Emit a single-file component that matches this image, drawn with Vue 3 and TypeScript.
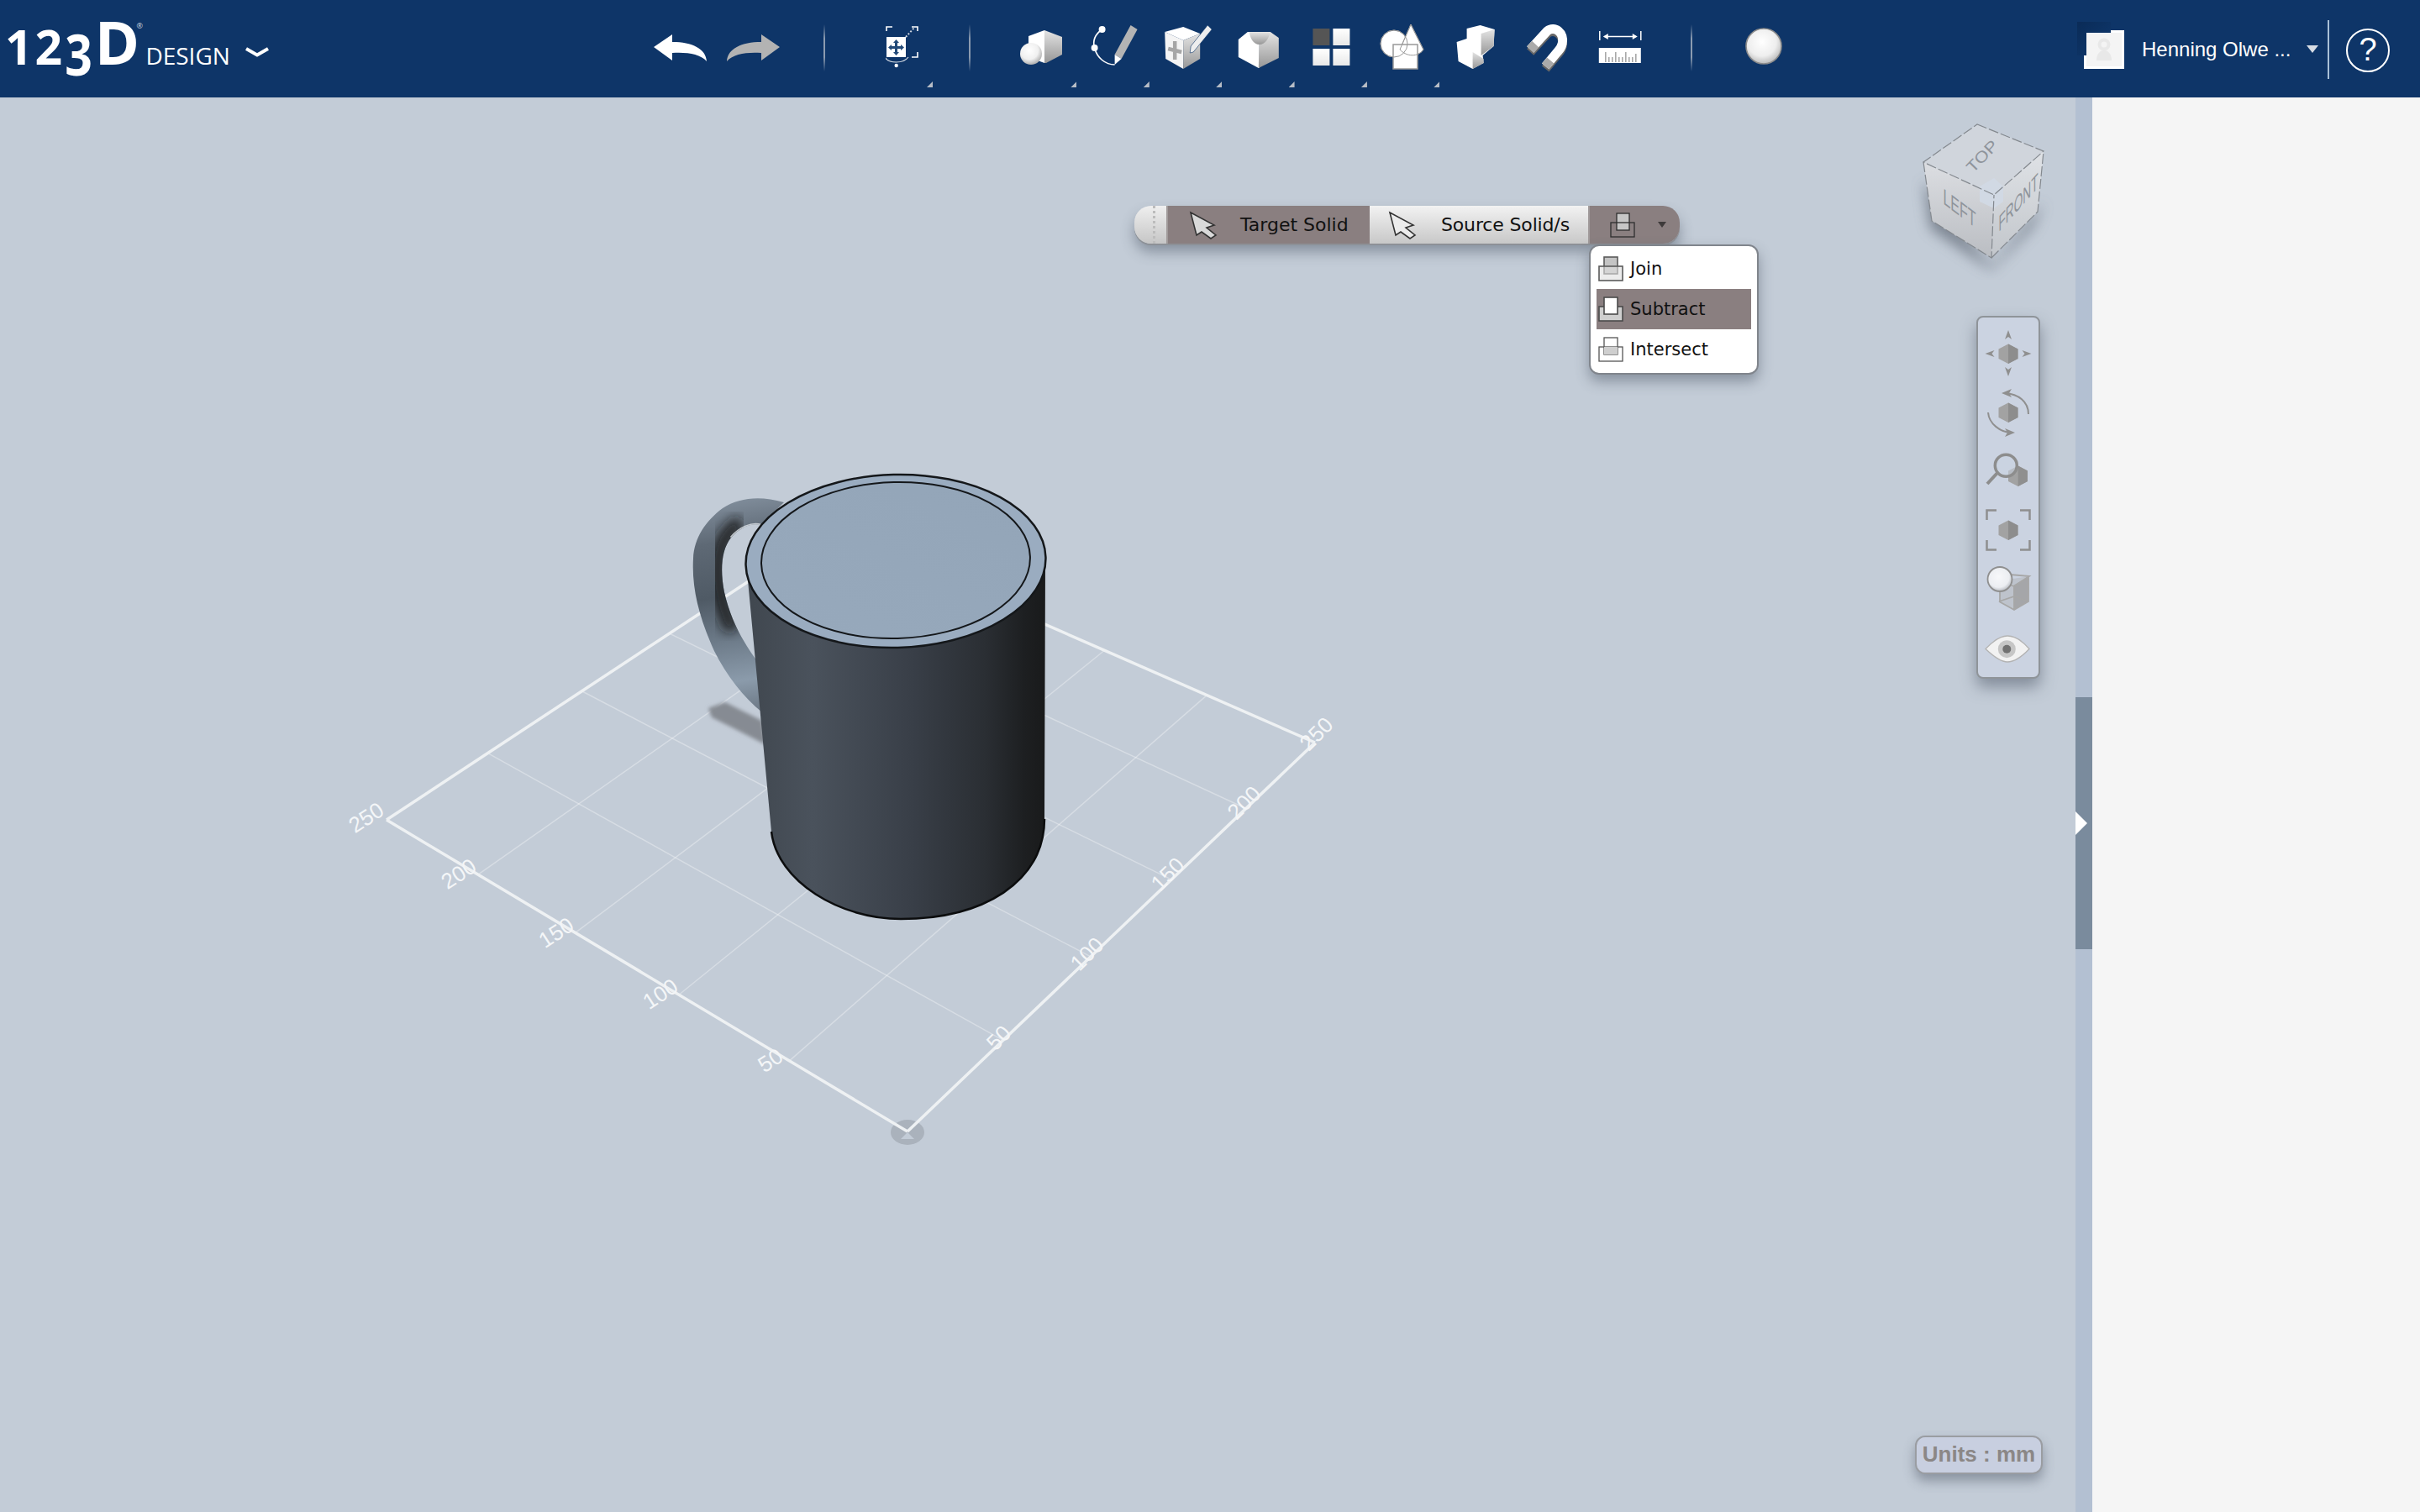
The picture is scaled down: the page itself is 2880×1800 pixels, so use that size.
<script setup lang="ts">
type Pt = [number, number];

const corners: Pt[] = [[1080, 1347], [1565, 884], [985, 630], [460, 976]];

// square -> quad projective map, the grid lines are not evenly spaced on screen
function project(u: number, v: number): Pt {
  const [[x0, y0], [x1, y1], [x2, y2], [x3, y3]] = corners;
  const sx = x0 - x1 + x2 - x3;
  const sy = y0 - y1 + y2 - y3;
  const dx1 = x1 - x2;
  const dx2 = x3 - x2;
  const dy1 = y1 - y2;
  const dy2 = y3 - y2;
  const d = dx1 * dy2 - dx2 * dy1;
  const g = (sx * dy2 - dx2 * sy) / d;
  const h = (dx1 * sy - sx * dy1) / d;
  const w = g * u + h * v + 1;
  return [
    ((x1 - x0 + g * x1) * u + (x3 - x0 + h * x3) * v + x0) / w,
    ((y1 - y0 + g * y1) * u + (y3 - y0 + h * y3) * v + y0) / w,
  ];
}

const steps = [0.2, 0.4, 0.6, 0.8];
const gridLines = steps.flatMap((t) => [
  [project(t, 0), project(t, 1)],
  [project(0, t), project(1, t)],
]);

const edges = [
  [corners[0], corners[1]],
  [corners[1], corners[2]],
  [corners[2], corners[3]],
  [corners[3], corners[0]],
];

const axisLabels = [
  { t: "250", x: 437, y: 975, r: -33 },
  { t: "200", x: 547, y: 1042, r: -33 },
  { t: "150", x: 663, y: 1112, r: -33 },
  { t: "100", x: 787, y: 1185, r: -33 },
  { t: "50", x: 918, y: 1264, r: -33 },
  { t: "50", x: 1190, y: 1237, r: -45 },
  { t: "100", x: 1295, y: 1137, r: -45 },
  { t: "150", x: 1391, y: 1042, r: -45 },
  { t: "200", x: 1482, y: 957, r: -45 },
  { t: "250", x: 1568, y: 875, r: -45 },
];

const toolBox = (i: number) => `${1196 + i * 86.4} 0 86.4 116`;
const hex = "38,23.5 49.5,29.5 49.5,41 38,47 26.5,41 26.5,29.5";
const handlePath =
  "M933 598 C905 590 880 592 860 605 C840 620 826 640 825 665 C823 700 832 735 850 775 C865 805 885 830 907 848 L903 790 C885 765 870 740 862 705 C857 680 858 655 870 640 C880 628 895 622 905 625 Z";
</script>

<template>
  <div class="app">
    <header class="topbar">
      <div class="logo">
        <span class="digits">12<span class="three">3</span></span><span class="big-d">D</span><span class="reg">®</span>
        <span class="design">DESIGN</span>
        <svg class="logo-chev" width="30" height="14" viewBox="0 0 30 14">
          <path d="M2 3 L15 10.5 L28 3" fill="none" stroke="#fff" stroke-width="4" />
        </svg>
      </div>

      <svg class="history" width="150" height="116" viewBox="778 0 150 116">
        <path d="M778 56 L800 41 L800 50 C824 50 840 58 841 73 C833 64 818 62 800 63 L800 72 Z" fill="#fff" />
        <path d="M928 56 L906 41 L906 50 C882 50 866 58 865 73 C873 64 888 62 906 63 L906 72 Z" fill="#b3b3b3" />
      </svg>
      <i class="sep sep-a"></i>

      <div class="tool has-menu fit">
        <svg width="60" height="116" viewBox="1054 0 60 116">
          <defs>
            <linearGradient id="faceR" x1="0" y1="0" x2="0" y2="1">
              <stop offset="0" stop-color="#e4e4e4" />
              <stop offset="1" stop-color="#979797" />
            </linearGradient>
            <linearGradient id="faceW" x1="0" y1="0" x2="0" y2="1">
              <stop offset="0" stop-color="#fff" />
              <stop offset="1" stop-color="#e8e8e8" />
            </linearGradient>
            <radialGradient id="ball" cx="0.42" cy="0.35" r="0.68">
              <stop offset="0" stop-color="#fff" />
              <stop offset="0.6" stop-color="#f0f0f0" />
              <stop offset="1" stop-color="#a9a9a9" />
            </radialGradient>
          </defs>
          <path d="M1055 37 V32 H1062 M1085 32 H1092 V37 M1092 62 V68 H1085" fill="none" stroke="#fff" stroke-width="1.6" />
          <path d="M1078 44 L1088 33" stroke="#cfd6e0" stroke-width="2" stroke-dasharray="2 2" />
          <rect x="1055" y="44" width="23" height="24" fill="#fff" />
          <path d="M1066.5 47 L1070 51 H1068 V55 H1072 V53 L1076 56.5 L1072 60 V58 H1068 V62 H1070 L1066.5 66 L1063 62 H1065 V58 H1061 V60 L1057 56.5 L1061 53 V55 H1065 V51 H1063 Z" fill="#234a78" />
          <path d="M1053 68 C1058 76 1075 76 1081 68" fill="none" stroke="#dfe4ea" stroke-width="1.2" />
          <circle cx="1066.7" cy="78" r="2.2" fill="#fff" />
        </svg>
      </div>
      <i class="sep sep-b"></i>

      <div class="tools">
        <div class="tool has-menu">
          <svg :viewBox="toolBox(0)" width="86.4" height="116">
            <path d="M1224 43 L1243 36 V75 L1224 68 Z" fill="#fff" />
            <path d="M1243 36 L1264 44 V65 L1245 75 L1243 75 Z" fill="url(#faceR)" />
            <circle cx="1227" cy="64" r="13" fill="url(#ball)" />
          </svg>
        </div>
        <div class="tool has-menu">
          <svg :viewBox="toolBox(1)" width="86.4" height="116">
            <path d="M1312 35 C1302 42 1301 50 1303 57 C1306 69 1316 77 1327 77" fill="none" stroke="#fff" stroke-width="1.6" />
            <circle cx="1312" cy="35" r="4" fill="#fff" />
            <circle cx="1303" cy="57" r="4" fill="#fff" />
            <path d="M1346 30 L1354 35 L1335 70 L1327 65 Z" fill="#b4b4b4" />
            <path d="M1327 65 L1335 70 L1327 77 Z" fill="#fff" />
          </svg>
        </div>
        <div class="tool has-menu">
          <svg :viewBox="toolBox(2)" width="86.4" height="116">
            <path d="M1386 38 L1408 32 L1428 40 L1408 48 Z" fill="#fff" />
            <path d="M1386 38 L1408 48 V82 L1387 70 Z" fill="#f4f4f4" />
            <path d="M1408 48 L1428 40 V70 L1408 82 Z" fill="url(#faceR)" />
            <path d="M1398 49 V71 M1390 58 L1406 62" stroke="#a6a6a6" stroke-width="4.5" fill="none" />
            <path d="M1437 30 L1442 35 L1420 62 L1416 63 L1417 55 Z" fill="#eee" stroke="#0e3568" stroke-width="0.6" />
          </svg>
        </div>
        <div class="tool has-menu">
          <svg :viewBox="toolBox(3)" width="86.4" height="116">
            <path d="M1474 47 L1485 38 H1499 V81 H1498 L1474 68 Z" fill="#fff" />
            <path d="M1499 38 H1512 L1522 45 V69 L1498 81 Z" fill="url(#faceR)" />
            <path d="M1487 38 C1488 46 1492 53 1499 53 C1506 53 1510 46 1512 38 Z" fill="url(#faceR)" />
          </svg>
        </div>
        <div class="tool has-menu">
          <svg :viewBox="toolBox(4)" width="86.4" height="116">
            <rect x="1562" y="34" width="20" height="20" fill="#555" />
            <rect x="1586" y="34" width="20" height="20" fill="url(#faceW)" />
            <rect x="1562" y="58" width="20" height="20" fill="url(#faceW)" />
            <rect x="1586" y="58" width="20" height="20" fill="url(#faceW)" />
          </svg>
        </div>
        <div class="tool has-menu">
          <svg :viewBox="toolBox(5)" width="86.4" height="116">
            <circle cx="1659" cy="52" r="16" fill="#fff" stroke="#999" />
            <path d="M1679 29 L1694 59 C1688 68 1674 68 1666 59 Z" fill="#fff" stroke="#999" />
            <rect x="1658" y="53" width="29" height="29" fill="#fff" stroke="#999" stroke-width="1.5" />
            <circle cx="1659" cy="52" r="16" fill="none" stroke="#999" />
            <path d="M1679 29 L1694 59 C1688 68 1674 68 1666 59 Z" fill="none" stroke="#999" />
          </svg>
        </div>
        <div class="tool">
          <svg :viewBox="toolBox(6)" width="86.4" height="116">
            <path d="M1746 34 L1762 30 L1779 35 L1778 55 L1765 66 L1766 75 L1753 82 L1736 73 L1734 50 L1746 46 Z" fill="#fff" />
            <path d="M1763 40 L1779 35 L1778 55 L1763 66 Z" fill="url(#faceR)" />
            <path d="M1753 62 L1766 70 V75 L1753 82 Z" fill="url(#faceR)" />
          </svg>
        </div>
        <div class="tool">
          <svg :viewBox="toolBox(7)" width="86.4" height="116">
            <path d="M1821 62 L1841 40 C1850 33 1862 42 1859 55 C1858 59 1856 62 1854 64 L1839 82" fill="none" stroke="#666" stroke-width="11" />
            <path d="M1821 59 L1841 37 C1850 30 1862 39 1859 52 C1858 56 1856 59 1854 61 L1839 79" fill="none" stroke="#fff" stroke-width="11" />
            <path d="M1821 59 L1827 52.5 M1845 72 L1839 79" fill="none" stroke="#aaa" stroke-width="11" />
          </svg>
        </div>
        <div class="tool">
          <svg :viewBox="toolBox(8)" width="86.4" height="116">
            <path d="M1904 37 V48 M1953 37 V48 M1910 43.5 H1947" stroke="#fff" stroke-width="1.5" />
            <path d="M1908 43.5 L1914 40 V47 Z M1949 43.5 L1943 40 V47 Z" fill="#fff" />
            <rect x="1903" y="57" width="50" height="18" fill="#fff" />
            <path d="M1911 62 V74 M1915 68 V74 M1919 68 V74 M1923 62 V74 M1927 68 V74 M1931 68 V74 M1935 62 V74 M1939 68 V74 M1943 68 V74 M1947 64 V74" stroke="#a8a8a8" stroke-width="1.6" />
          </svg>
        </div>
      </div>
      <i class="sep sep-c"></i>

      <svg class="material" width="46" height="46" viewBox="0 0 46 46">
        <defs>
          <radialGradient id="matBall" cx="0.45" cy="0.38" r="0.62">
            <stop offset="0" stop-color="#fff" />
            <stop offset="0.65" stop-color="#eee" />
            <stop offset="1" stop-color="#bdbdbd" />
          </radialGradient>
        </defs>
        <circle cx="23" cy="23" r="21" fill="url(#matBall)" stroke="#8b8b8b" stroke-width="1.6" />
      </svg>

      <div class="user">
        <div class="avatar">
          <svg width="48" height="46" viewBox="0 0 48 46">
            <rect x="3" y="3" width="42" height="40" fill="#f4f4f4" />
            <circle cx="24" cy="17" r="5.5" fill="none" stroke="#e8e8e8" stroke-width="4" />
            <path d="M15 36 C15 27 20 24 24 24 C28 24 33 27 33 36 Z" fill="#e8e8e8" />
          </svg>
        </div>
        <span class="user-name">Henning Olwe ...</span>
        <i class="user-caret"></i>
        <i class="user-sep"></i>
        <div class="help">?</div>
      </div>
    </header>

    <main class="workspace">
      <div class="viewport">
        <svg class="scene" width="2470" height="1684" viewBox="0 116 2470 1684">
          <defs>
            <linearGradient id="mugBody" x1="0" y1="0" x2="1" y2="0">
              <stop offset="0" stop-color="#40474f" />
              <stop offset="0.22" stop-color="#4a525c" />
              <stop offset="0.55" stop-color="#393f48" />
              <stop offset="0.8" stop-color="#2a2e33" />
              <stop offset="0.93" stop-color="#1d1f21" />
              <stop offset="1" stop-color="#191a1b" />
            </linearGradient>
            <linearGradient id="mugTop" x1="0" y1="1" x2="1" y2="0">
              <stop offset="0" stop-color="#97a9bc" />
              <stop offset="1" stop-color="#93a5b8" />
            </linearGradient>
            <linearGradient id="mugHandle" gradientUnits="userSpaceOnUse" x1="850" y1="595" x2="890" y2="848">
              <stop offset="0" stop-color="#828f9d" />
              <stop offset="0.2" stop-color="#5e6975" />
              <stop offset="0.45" stop-color="#4f5a65" />
              <stop offset="0.65" stop-color="#6c7a88" />
              <stop offset="0.85" stop-color="#8b9bab" />
              <stop offset="1" stop-color="#6c7885" />
            </linearGradient>
            <clipPath id="handleClip"><path :d="handlePath" /></clipPath>
            <linearGradient id="cubeL" x1="0" y1="0" x2="0" y2="1">
              <stop offset="0" stop-color="#dcdee2" />
              <stop offset="1" stop-color="#babdc2" />
            </linearGradient>
            <linearGradient id="cubeR" x1="0" y1="0" x2="0" y2="1">
              <stop offset="0" stop-color="#dfe2e6" />
              <stop offset="1" stop-color="#c2c6cb" />
            </linearGradient>
            <filter id="blur2"><feGaussianBlur stdDeviation="2" /></filter>
            <filter id="blur7"><feGaussianBlur stdDeviation="7" /></filter>
            <filter id="blur8"><feGaussianBlur stdDeviation="8" /></filter>
          </defs>

          <line
            v-for="(l, i) in gridLines"
            :key="i"
            :x1="l[0][0]"
            :y1="l[0][1]"
            :x2="l[1][0]"
            :y2="l[1][1]"
            stroke="#fff"
            stroke-opacity="0.33"
            stroke-width="1.5"
          />
          <ellipse cx="1080" cy="1348" rx="20" ry="15" fill="#aab2bc" />
          <path d="M1072 1356 L1080 1348 L1088 1356 Z" fill="#c3ccd7" />
          <line
            v-for="(l, i) in edges"
            :key="'e' + i"
            :x1="l[0][0]"
            :y1="l[0][1]"
            :x2="l[1][0]"
            :y2="l[1][1]"
            stroke="#eef1f3"
            stroke-width="3.5"
          />
          <text
            v-for="(a, i) in axisLabels"
            :key="'a' + i"
            class="axis-label"
            :transform="`translate(${a.x} ${a.y}) rotate(${a.r})`"
            text-anchor="middle"
            dominant-baseline="middle"
          >{{ a.t }}</text>

          <!-- mug -->
          <path d="M843 843 L863 836 L907 858 L912 887 L877 869 L847 854 Z" fill="#868b93" filter="url(#blur2)" />
          <path :d="handlePath" fill="url(#mugHandle)" />
          <g clip-path="url(#handleClip)">
            <path d="M882 622 C864 632 854 652 854 680 C855 705 862 730 872 750" fill="none" stroke="#14171a" stroke-opacity="0.85" stroke-width="18" filter="url(#blur7)" />
            <path d="M870 640 C880 628 895 622 905 625" fill="none" stroke="#dfe4e9" stroke-opacity="0.8" stroke-width="3" />
          </g>
          <path
            d="M889 680 L918 990 C925 1050 1000 1094 1072 1094 C1170 1094 1243 1050 1243 975 L1244 668 Z"
            fill="url(#mugBody)"
          />
          <path d="M918 990 C925 1050 1000 1094 1072 1094 C1170 1094 1243 1050 1243 975" fill="none" stroke="#0c0d0e" stroke-width="2.5" />
          <g transform="rotate(-1.5 1066 668)">
            <ellipse cx="1066" cy="668" rx="178.5" ry="103" fill="#9aacc0" stroke="#14171a" stroke-width="2.5" />
            <ellipse cx="1066" cy="667" rx="160" ry="93" fill="url(#mugTop)" stroke="#14171a" stroke-width="2" />
          </g>

          <!-- view cube -->
          <path d="M2289 215 L2370 318 L2432 240 L2420 270 L2370 322 L2297 272 Z" fill="#5f6875" opacity="0.7" filter="url(#blur8)" />
          <path d="M2353 148 L2432 180 L2373 232 L2289 193 Z" fill="#d0d5dc" />
          <path d="M2289 193 L2373 232 L2370 307 L2299 263 Z" fill="url(#cubeL)" />
          <path d="M2373 232 L2432 180 L2425 252 L2370 307 Z" fill="url(#cubeR)" />
          <path d="M2373 212 L2384 222 V240 L2373 248 L2356 240 V222 Z" fill="#d1d9e4" />
          <path
            d="M2353 148 L2432 180 L2373 232 L2289 193 Z M2289 193 L2299 263 L2370 307 L2373 232 M2370 307 L2425 252 L2432 180"
            fill="none"
            stroke="#84898f"
            stroke-width="1.2"
            stroke-dasharray="12 3"
          />
          <text class="cube-label" transform="translate(2360 187) rotate(-46) scale(1 .85)" text-anchor="middle" dominant-baseline="middle">TOP</text>
          <text class="cube-label" transform="translate(2332 250) matrix(.73 .55 0 1.2 0 0)" text-anchor="middle" dominant-baseline="middle">LEFT</text>
          <text class="cube-label" transform="translate(2402 243) matrix(.62 -.7 0 1.2 0 0)" text-anchor="middle" dominant-baseline="middle">FRONT</text>
        </svg>

        <!-- floating boolean tool -->
        <div class="bool-bar">
          <div class="handle"><i class="grip"></i></div>
          <div class="seg seg-target active">
            <svg class="cursor" width="34" height="34" viewBox="0 0 34 34">
              <path d="M2 2 L30 17 L21 20 L32 29 L26 33 L15 25 L9 29 Z" fill="#d9d9d9" stroke="#333" stroke-width="1.6" />
            </svg>
            <span>Target Solid</span>
          </div>
          <div class="seg seg-source">
            <svg class="cursor" width="34" height="34" viewBox="0 0 34 34">
              <path d="M2 2 L30 17 L21 20 L32 29 L26 33 L15 25 L9 29 Z" fill="#ececec" stroke="#333" stroke-width="1.6" />
            </svg>
            <span>Source Solid/s</span>
          </div>
          <div class="seg seg-op active">
            <svg width="30" height="30" viewBox="0 0 30 30">
              <rect x="8" y="1" width="15" height="20" fill="#c6c6c6" stroke="#2e2e2e" stroke-width="1.3" />
              <rect x="1" y="12" width="28" height="17" fill="none" stroke="#2e2e2e" stroke-width="1.3" />
            </svg>
            <i class="op-caret"></i>
          </div>
        </div>

        <ul class="bool-menu">
          <li>
            <svg width="30" height="30" viewBox="0 0 30 30">
              <rect x="7" y="1" width="16" height="20" fill="#c4c4c4" stroke="#5a5a5a" stroke-width="1.6" />
              <rect x="1" y="12" width="28" height="17" fill="#e0e0e0" fill-opacity="0.6" stroke="#5a5a5a" stroke-width="1.6" />
            </svg>
            <span>Join</span>
          </li>
          <li class="picked">
            <svg width="30" height="30" viewBox="0 0 30 30">
              <rect x="1" y="12" width="28" height="17" fill="#cfcfcf" stroke="#4a4a4a" stroke-width="1.6" />
              <rect x="7" y="1" width="16" height="20" fill="#fff" stroke="#4a4a4a" stroke-width="1.6" />
            </svg>
            <span>Subtract</span>
          </li>
          <li>
            <svg width="30" height="30" viewBox="0 0 30 30">
              <rect x="1" y="12" width="28" height="17" fill="none" stroke="#555" stroke-width="1.3" />
              <rect x="7" y="1" width="16" height="20" fill="none" stroke="#555" stroke-width="1.3" />
              <rect x="7" y="12" width="16" height="9" fill="#cfcfcf" />
            </svg>
            <span>Intersect</span>
          </li>
        </ul>

        <!-- navigation bar -->
        <div class="nav-bar">
          <svg width="76" height="70" viewBox="0 0 76 70">
            <polygon :points="hex" fill="#a2a2a2" />
            <path d="M38 23.5 L49.5 29.5 V41 L38 47 Z" fill="#8d8d8d" />
            <path d="M38 7 L42 18 L38 15 L34 18 Z M38 62 L42 51 L38 54 L34 51 Z M10.5 35 L21.5 31 L18.5 35 L21.5 39 Z M65.5 35 L54.5 31 L57.5 35 L54.5 39 Z" fill="#8f8f8f" />
          </svg>
          <svg width="76" height="70" viewBox="0 0 76 70">
            <polygon :points="hex" fill="#a2a2a2" />
            <path d="M38 23.5 L49.5 29.5 V41 L38 47 Z" fill="#8d8d8d" />
            <path d="M34 12 C50 13 62 22 62 37 M14 35 C15 48 28 59 43 59" fill="none" stroke="#8f8f8f" stroke-width="2" />
            <path d="M30 12 L42 7 L39 12 L42 17 Z M46 59 L34 54 L37 59 L34 64 Z" fill="#8f8f8f" />
          </svg>
          <svg width="76" height="70" viewBox="0 0 76 70">
            <path d="M49.7 28.5 L61 34.5 V47 L49.7 53 L38 47 V34.5 Z" fill="#a2a2a2" />
            <path d="M49.7 28.5 L61 34.5 V47 L49.7 53 Z" fill="#8f8f8f" />
            <circle cx="35.3" cy="28.3" r="13" fill="#cbd3e1" fill-opacity="0.55" stroke="#8d8d8d" stroke-width="3.5" />
            <path d="M25 37 L13 50" stroke="#8d8d8d" stroke-width="4" />
          </svg>
          <svg width="76" height="70" viewBox="0 0 76 70">
            <polygon :points="hex" fill="#a2a2a2" />
            <path d="M38 23.5 L49.5 29.5 V41 L38 47 Z" fill="#8d8d8d" />
            <path d="M12.5 23 V11.5 H24 M52 11.5 H63.5 V23 M12.5 47 V58.5 H24 M52 58.5 H63.5 V47" fill="none" stroke="#8f8f8f" stroke-width="2.5" />
          </svg>
          <svg width="76" height="70" viewBox="0 0 76 70">
            <defs>
              <radialGradient id="navBall" cx="0.45" cy="0.4" r="0.62">
                <stop offset="0" stop-color="#f7f8fa" />
                <stop offset="0.7" stop-color="#eceef2" />
                <stop offset="1" stop-color="#b2b6bc" />
              </radialGradient>
            </defs>
            <path d="M30 25 L63 20 L62 50 L45 60 L27 50 Z" fill="#a6a6a6" fill-opacity="0.35" />
            <path d="M44 31 L62 20 L62 50 L45 60 Z" fill="#9a9a9a" fill-opacity="0.7" />
            <path d="M40 18 L63 20 L45 32 L28 26 M45 32 V60 M27 50 L45 60 L62 50 V20 M28 26 V50 M27 50 L45 44 L62 50" fill="none" stroke="#a7a7a7" stroke-width="1.8" />
            <circle cx="28" cy="23.5" r="14.5" fill="url(#navBall)" stroke="#8f8f8f" stroke-width="1.8" />
          </svg>
          <svg width="76" height="70" viewBox="0 0 76 70">
            <path d="M11 36.5 C22 25 30 21 37 21 C44 21 53 25 63 36.5 C53 47 44 52 37 52 C30 52 22 47 11 36.5 Z" fill="#f2f2f2" stroke="#b3b3b3" stroke-width="1.3" />
            <circle cx="36.3" cy="36.7" r="10.5" fill="#c6c6c6" />
            <circle cx="36.3" cy="36.7" r="5" fill="#717171" />
          </svg>
        </div>

        <div class="units">Units : mm</div>
      </div>

      <div class="sash">
        <div class="sash-grip"><i class="sash-arrow"></i></div>
      </div>
      <aside class="side-panel"></aside>
    </main>
  </div>
</template>

<style scoped>
.app {
  display: flex;
  flex-direction: column;
  width: 2880px;
  height: 1800px;
  overflow: hidden;
  font-family: "Liberation Sans", Arial, sans-serif;
}

.topbar {
  display: flex;
  align-items: flex-start;
  flex: 0 0 116px;
  height: 116px;
  background: #0e3568;
}

.logo {
  display: flex;
  align-items: baseline;
  width: 330px;
  height: 116px;
  padding: 7px 0 0 6px;
  box-sizing: border-box;
  color: #fff;
  font-family: "Open Sans", sans-serif;
  line-height: 84px;
}
.digits {
  font-size: 57px;
  font-weight: 700;
  letter-spacing: 3px;
}
.three {
  display: inline-block;
  font-size: 57px;
  vertical-align: -5px;
  line-height: 1;
  transform: scaleY(1.2);
  transform-origin: 50% 10px;
}
.big-d {
  font-size: 72px;
  font-weight: 700;
  letter-spacing: -8.7px;
}
.reg {
  align-self: flex-start;
  font-size: 9px;
  line-height: 12px;
  margin: 18px 0 0 5px;
  width: 9px;
  color: #c8d2de;
}
.design {
  font-size: 28px;
  font-weight: 400;
  margin-left: 2px;
}
.logo-chev {
  margin-left: 17px;
  align-self: flex-start;
  margin-top: 48px;
}

.history {
  margin-left: 448px;
  flex: none;
}

.sep {
  flex: none;
  width: 2px;
  height: 56px;
  margin-top: 29px;
  background: linear-gradient(to bottom, transparent, #8b9bb0 30%, #8b9bb0 70%, transparent);
}
.sep-a {
  margin-left: 52px;
}
.sep-b {
  margin-left: 42px;
}
.sep-c {
  margin-left: 38px;
}

.tool {
  position: relative;
  flex: none;
  height: 116px;
}
.tool svg {
  display: block;
}
.has-menu::after {
  content: "";
  position: absolute;
  right: 1px;
  bottom: 12px;
  width: 7px;
  height: 7px;
  background: #b7bdc6;
  clip-path: polygon(100% 0, 100% 100%, 0 100%);
}
.fit {
  margin-left: 72px;
  width: 57px;
}
.tools {
  display: flex;
  flex: none;
  margin-left: 41px;
}

.material {
  flex: none;
  margin: 32px 0 0 62px;
}

.user {
  display: flex;
  align-items: flex-start;
  margin-left: auto;
  padding-right: 36px;
}
.avatar {
  position: relative;
  width: 48px;
  height: 46px;
  margin-top: 36px;
  background: #fff;
}
.avatar::before {
  content: "";
  position: absolute;
  left: -8px;
  top: -10px;
  width: 40px;
  height: 40px;
  background: linear-gradient(135deg, #0a2b57, #0e3568 70%);
}
.avatar svg {
  position: relative;
  display: block;
}
.user-name {
  margin: 45px 0 0 21px;
  width: 176px;
  color: #fff;
  font-size: 24px;
  line-height: 28px;
  white-space: nowrap;
}
.user-caret {
  width: 0;
  height: 0;
  margin: 54px 0 0 20px;
  border-left: 7px solid transparent;
  border-right: 7px solid transparent;
  border-top: 9px solid #d7dde5;
}
.user-sep {
  width: 2px;
  height: 70px;
  margin: 24px 0 0 11px;
  background: #a9c0d8;
}
.help {
  width: 52px;
  height: 52px;
  margin: 34px 0 0 20px;
  box-sizing: border-box;
  border: 2px solid #fff;
  border-radius: 50%;
  color: #fff;
  font-size: 38px;
  line-height: 47px;
  text-align: center;
}

.workspace {
  display: flex;
  flex: 1;
  min-height: 0;
}
.viewport {
  position: relative;
  flex: 0 0 2470px;
  background: #c3ccd7;
  overflow: hidden;
}
.scene {
  position: absolute;
  left: 0;
  top: 0;
}
.axis-label {
  fill: #f4f6f8;
  font-family: "Liberation Sans", sans-serif;
  font-size: 26px;
}
.cube-label {
  fill: #8f949b;
  font-family: "Liberation Sans", sans-serif;
  font-size: 22px;
}

.sash {
  display: flex;
  align-items: flex-start;
  flex: 0 0 20px;
  background: #b3c0d2;
}
.sash-grip {
  display: flex;
  align-items: center;
  width: 20px;
  height: 300px;
  margin-top: 714px;
  background: #7a8b9d;
}
.sash-arrow {
  width: 0;
  height: 0;
  border-left: 14px solid #fff;
  border-top: 14px solid transparent;
  border-bottom: 14px solid transparent;
}
.side-panel {
  flex: 1;
  background: #f5f5f5;
}

.bool-bar {
  position: absolute;
  left: 1350px;
  top: 129px;
  display: flex;
  width: 649px;
  height: 45px;
  border-radius: 20px;
  overflow: hidden;
  box-shadow: 0 2px 0 #8d9197, 0 10px 16px rgba(65, 75, 90, 0.45);
  font-family: "DejaVu Sans", sans-serif;
  font-size: 22px;
  color: #111;
}
.handle {
  display: flex;
  justify-content: center;
  flex: 0 0 40px;
  padding-left: 8px;
  background: linear-gradient(to bottom, #efefef, #c6c6c6);
  border-right: 2px solid #a09a9a;
  box-sizing: border-box;
}
.grip {
  width: 0;
  height: 100%;
  border-left: 3px dotted #bcbcbc;
}
.seg {
  position: relative;
  display: flex;
  align-items: center;
  box-sizing: border-box;
  background: linear-gradient(to bottom, #f2f2f2, #c8c8c8);
}
.seg.active {
  background: #8a7f80;
}
.seg-target {
  flex: 0 0 240px;
  padding-left: 25px;
}
.seg-source {
  flex: 0 0 260px;
  padding-left: 22px;
}
.seg-op {
  flex: 1;
  padding-left: 24px;
  border-left: 2px solid #a09a9a;
}
.cursor {
  flex: none;
}
.seg-target span {
  margin-left: 27px;
  white-space: nowrap;
}
.seg-source span {
  margin-left: 29px;
  letter-spacing: -0.15px;
  white-space: nowrap;
}
.op-caret {
  width: 0;
  height: 0;
  margin-left: 27px;
  border-left: 5px solid transparent;
  border-right: 5px solid transparent;
  border-top: 7px solid #3e3a3a;
}

.bool-menu {
  position: absolute;
  left: 1891px;
  top: 175px;
  width: 202px;
  height: 155px;
  margin: 0;
  padding: 3px 7px 6px;
  box-sizing: border-box;
  list-style: none;
  background: #fff;
  border: 2px solid #80858c;
  border-radius: 12px;
  box-shadow: 0 8px 16px rgba(65, 75, 90, 0.45);
  font-family: "DejaVu Sans", sans-serif;
  font-size: 21px;
  color: #111;
}
.bool-menu li {
  display: flex;
  align-items: center;
  height: 48px;
  padding-left: 2px;
}
.bool-menu li.picked {
  background: #8a7f80;
}
.bool-menu span {
  margin-left: 8px;
}

.nav-bar {
  position: absolute;
  left: 2352px;
  top: 260px;
  display: flex;
  flex-direction: column;
  width: 76px;
  height: 432px;
  padding-top: 8px;
  box-sizing: border-box;
  background: #cbd3e1;
  border: 2px solid #8f9499;
  border-radius: 8px;
  box-shadow: 0 10px 18px rgba(70, 80, 95, 0.5);
}
.nav-bar svg {
  display: block;
  flex: none;
  margin-left: -2px;
}

.units {
  position: absolute;
  left: 2279px;
  top: 1593px;
  width: 152px;
  height: 46px;
  box-sizing: border-box;
  background: #c8cfe0;
  border: 2px solid #9a9da2;
  border-radius: 12px;
  box-shadow: 0 8px 14px rgba(70, 80, 95, 0.45);
  color: #8b8786;
  font-size: 26px;
  font-weight: 700;
  line-height: 40px;
  text-align: center;
  white-space: nowrap;
}
</style>
